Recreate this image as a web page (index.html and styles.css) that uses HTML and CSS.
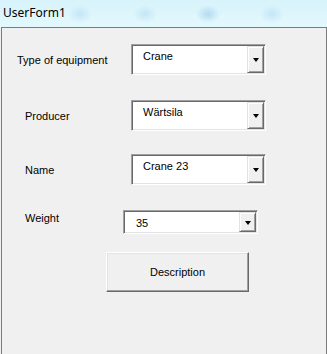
FILE: index.html
```html
<!DOCTYPE html>
<html>
<head>
<meta charset="utf-8">
<link rel="stylesheet" href="styles.css">
</head>
<body>
<div class="window">
  <div class="titlebar"><span class="title">UserForm1</span></div>
  <div class="client">
    <div class="row row-type">
      <span class="label">Type of equipment</span>
      <div class="combo"><span class="val">Crane</span><span class="drop"><span class="arrow"></span></span></div>
    </div>
    <div class="row row-producer">
      <span class="label">Producer</span>
      <div class="combo"><span class="val">Wärtsila</span><span class="drop"><span class="arrow"></span></span></div>
    </div>
    <div class="row row-name">
      <span class="label">Name</span>
      <div class="combo"><span class="val">Crane 23</span><span class="drop"><span class="arrow"></span></span></div>
    </div>
    <div class="row row-weight">
      <span class="label">Weight</span>
      <div class="combo short"><span class="val">35</span><span class="drop"><span class="arrow"></span></span></div>
    </div>
    <div class="btnrow">
      <button class="cmd">Description</button>
    </div>
  </div>
</div>
</body>
</html>
```
FILE: styles.css
```css
html, body {
  margin: 0;
  padding: 0;
}
body {
  width: 327px;
  height: 354px;
  overflow: hidden;
  font-family: "Liberation Sans", Arial, sans-serif;
  font-size: 11px;
  color: #000;
  background: #f0f0f0;
}
.window {
  width: 327px;
  height: 354px;
  display: flex;
  flex-direction: column;
}
.titlebar {
  height: 27px;
  flex: none;
  background:
    radial-gradient(ellipse 12px 9px at 80px 14px, rgba(160,205,235,0.4), transparent),
    radial-gradient(ellipse 12px 9px at 145px 14px, rgba(160,205,235,0.4), transparent),
    radial-gradient(ellipse 12px 9px at 208px 14px, rgba(140,190,230,0.5), transparent),
    radial-gradient(ellipse 12px 9px at 272px 14px, rgba(160,205,235,0.4), transparent),
    linear-gradient(#d8f3fb, #e2f8fd);
  display: flex;
  align-items: center;
  padding-left: 3px;
  box-sizing: border-box;
}
.title {
  font-family: "Noto Sans", "Liberation Sans", sans-serif;
  font-size: 12px;
  position: relative;
  top: -1px;
}
.client {
  flex: 1;
  margin-left: 1px;
  border-top: 1px solid #7c7c7c;
  border-left: 1px solid #7c7c7c;
  border-right: 1px solid #7c7c7c;
  background: #f0f0f0;
}
.row {
  display: flex;
  align-items: center;
}
.label {
  flex: none;
}
.row-type { margin-top: 16px; padding-left: 15px; }
.row-type .label { width: 114px; }
.row-producer { margin-top: 25px; padding-left: 23px; }
.row-producer .label { width: 106px; }
.row-name { margin-top: 23px; padding-left: 23px; }
.row-name .label { width: 106px; }
.row-weight { margin-top: 25px; padding-left: 23px; }
.row-weight .label { width: 98px; position: relative; top: -4px; }

.combo {
  width: 135px;
  height: 31px;
  box-sizing: border-box;
  border: 1px solid;
  border-color: #a0a0a0 #ffffff #ffffff #a0a0a0;
  box-shadow: inset 1px 1px 0 #696969, inset -1px -1px 0 #e3e3e3;
  background: #fff;
  display: flex;
  padding: 1px;
}
.combo.short {
  height: 24px;
}
.val {
  flex: 1;
  padding-left: 10px;
  padding-top: 4px;
  line-height: 13px;
}
.short .val {
  padding-left: 11px;
  padding-top: 5px;
}
.drop {
  width: 17px;
  flex: none;
  box-sizing: border-box;
  background: #f0f0f0;
  border: 1px solid;
  border-color: #e3e3e3 #696969 #696969 #e3e3e3;
  box-shadow: inset 1px 1px 0 #ffffff, inset -1px -1px 0 #a0a0a0;
  display: flex;
  align-items: center;
  justify-content: center;
}
.arrow {
  width: 0;
  height: 0;
  border-left: 3.5px solid transparent;
  border-right: 3.5px solid transparent;
  border-top: 4px solid #000;
  margin-top: 1px;
}
.btnrow {
  margin-top: 18px;
  padding-left: 104px;
}
.cmd {
  width: 143px;
  height: 40px;
  margin: 0;
  padding: 0;
  box-sizing: border-box;
  background: #f0f0f0;
  font-family: "Liberation Sans", Arial, sans-serif;
  font-size: 11px;
  color: #000;
  border: 1px solid;
  border-color: #ffffff #696969 #696969 #ffffff;
  box-shadow: inset -1px -1px 0 #a0a0a0, inset 1px 1px 0 #e3e3e3;
}
```
